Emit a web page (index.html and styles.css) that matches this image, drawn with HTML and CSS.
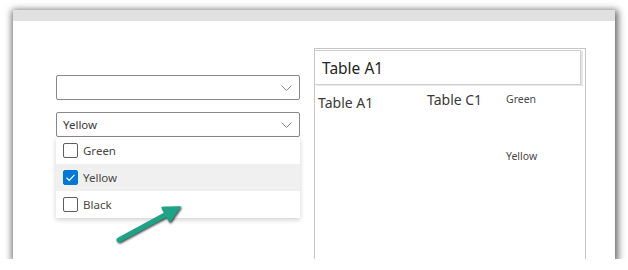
FILE: index.html
```html
<!DOCTYPE html>
<html lang="en">
<head>
    <meta charset="UTF-8">
    <title>Slicer and table</title>
    <link rel="stylesheet" href="styles.css">
</head>
<body>
    <div class="frame">
        <div class="topbar"></div>
        <div class="content">
            <div class="slicers">
                <div class="dropdown">
                    <span class="value"></span>
                    <svg class="chevron" width="11" height="6" viewBox="0 0 11 6"><polyline points="0.5,0.5 5.5,5.5 10.5,0.5" /></svg>
                </div>
                <div class="dropdown open">
                    <span class="value">Yellow</span>
                    <svg class="chevron" width="11" height="6" viewBox="0 0 11 6"><polyline points="0.5,0.5 5.5,5.5 10.5,0.5" /></svg>
                </div>
                <ul class="options">
                    <li class="option"><span class="box"></span>Green</li>
                    <li class="option selected">
                        <span class="box checked">
                            <svg width="15" height="15" viewBox="0 0 15 15"><polyline points="3.5,7.8 6.2,10.3 11.5,4.8" /></svg>
                        </span>Yellow
                    </li>
                    <li class="option"><span class="box"></span>Black</li>
                </ul>
            </div>

            <div class="table-visual">
                <div class="table-title">Table A1</div>
                <div class="table-grid">
                    <div class="cell cell-a">Table A1</div>
                    <div class="cell cell-c">Table C1</div>
                    <div class="cell-colors">
                        <span>Green</span>
                        <span>Yellow</span>
                    </div>
                </div>
            </div>
        </div>

        <!-- annotation arrow drawn over the page -->
        <svg class="pointer" width="85" height="55" viewBox="0 0 85 55">
            <line x1="11" y1="45" x2="58.5" y2="19.3" />
            <polygon points="72,12 61.7,26.7 54.1,12.6" />
        </svg>
    </div>
</body>
</html>
```

FILE: styles.css
```css
:root {
    --text-dark: #3b3a39;
    --text-mid: #4a4846;
    --border-color: #8a8886;
    --line-color: #d2d0ce;
    --accent: #0078d4;
    --arrow: #1da386;
}

body {
    margin: 0;
    background: #ffffff;
    font-family: 'Noto Sans', 'Open Sans', sans-serif;
    color: var(--text-dark);
}

.frame {
    position: relative;
    margin: 10px 0 0 13px;
    width: 602px;
    height: 249px;
    background: #ffffff;
    overflow: hidden;
    box-shadow: 1px 2px 7px 2px rgba(0, 0, 0, 0.6);
}

.topbar {
    height: 11px;
    background: #e0e0e0;
}

.content {
    display: flex;
    height: 238px;
}

/* left column: the two dropdown slicers */
.slicers {
    width: 244px;
    padding: 54px 14px 0 43px;
    display: flex;
    flex-direction: column;
}

.dropdown {
    height: 23px;
    border: 1px solid var(--border-color);
    border-radius: 2px;
    display: flex;
    align-items: center;
    justify-content: space-between;
    padding: 0 7px 0 6px;
    font-size: 11.5px;
}

.dropdown + .dropdown {
    margin-top: 12px;
}

.chevron polyline {
    fill: none;
    stroke: #8a8886;
    stroke-width: 1;
}

.options {
    list-style: none;
    margin: 0;
    padding: 0;
    background: #ffffff;
    box-shadow: 0 2px 5px rgba(0, 0, 0, 0.18);
}

.option {
    height: 27px;
    display: flex;
    align-items: center;
    padding-left: 7px;
    font-size: 11.5px;
    color: var(--text-mid);
}

.option.selected {
    background: #f0f0f0;
}

.box {
    width: 13px;
    height: 13px;
    border: 1px solid #605e5c;
    border-radius: 2px;
    margin-right: 5px;
    background: #ffffff;
    position: relative;
}

.box.checked {
    background: var(--accent);
    border-color: var(--accent);
}

.box svg {
    position: absolute;
    left: -1px;
    top: -1px;
}

.box svg polyline {
    fill: none;
    stroke: #ffffff;
    stroke-width: 1.2;
}

/* right column: table visual */
.table-visual {
    margin-top: 27px;
    width: 270px;
    border: 1px solid #c8c6c4;
    border-bottom: none;
}

.table-title {
    margin: 1px 4px 0 0;
    height: 33px;
    border: 1px solid var(--line-color);
    border-left: none;
    box-shadow: 2px 1px 0 #e6e6e6;
    display: flex;
    align-items: center;
    padding-left: 7px;
    font-size: 15.5px;
    color: #252423;
}

.table-grid {
    display: grid;
    grid-template-columns: 109px 79px 1fr;
    padding: 5px 0 0 3px;
    align-items: start;
}

.cell {
    font-size: 14px;
    line-height: 20px;
    color: var(--text-dark);
}

.cell-a {
    padding-top: 3px;
}

.cell-c {
    padding-top: 0;
}

.cell-colors {
    display: flex;
    flex-direction: column;
    gap: 42px;
    font-size: 10.5px;
    line-height: 15px;
    padding-top: 2px;
    color: var(--text-mid);
}

.pointer {
    position: absolute;
    left: 95px;
    top: 185px;
    filter: drop-shadow(1px 1.5px 1px rgba(0, 0, 0, 0.75));
}

.pointer line {
    stroke: var(--arrow);
    stroke-width: 5;
    stroke-linecap: round;
}

.pointer polygon {
    fill: var(--arrow);
    stroke: var(--arrow);
    stroke-width: 1.5;
    stroke-linejoin: round;
}
```
